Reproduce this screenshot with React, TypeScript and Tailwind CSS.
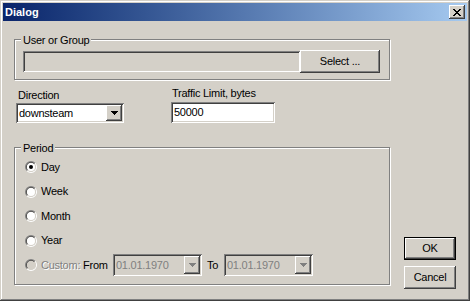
const raised =
  "shadow-[inset_-1px_-1px_#404040,inset_1px_1px_#fff,inset_-2px_-2px_#808080,inset_2px_2px_#d4d0c8]";
const sunken =
  "shadow-[inset_1px_1px_#808080,inset_-1px_-1px_#fff,inset_2px_2px_#404040,inset_-2px_-2px_#d4d0c8]";

function Arrow({ color = "#000" }: { color?: string }) {
  return (
    <svg width="7" height="4" viewBox="0 0 7 4" shapeRendering="crispEdges">
      <path d="M0 0h7v1H0zM1 1h5v1H1zM2 2h3v1H2zM3 3h1v1H3z" fill={color} />
    </svg>
  );
}

function CloseGlyph() {
  return (
    <svg width="8" height="7" viewBox="0 0 8 7" shapeRendering="crispEdges">
      <path
        d="M0 0h2v1H0zM6 0h2v1H6zM1 1h2v1H1zM5 1h2v1H5zM2 2h4v1H2zM3 3h2v1H3zM2 4h4v1H2zM1 5h2v1H1zM5 5h2v1H5zM0 6h2v1H0zM6 6h2v1H6z"
        fill="#000"
      />
    </svg>
  );
}

function Radio({ checked, disabled }: { checked?: boolean; disabled?: boolean }) {
  return (
    <svg width="12" height="12" viewBox="0 0 12 12" className="shrink-0">
      <circle cx="6" cy="6" r="5.5" fill="none" stroke="#808080" strokeDasharray="17.28 17.28" transform="rotate(135 6 6)" />
      <circle cx="6" cy="6" r="5.5" fill="none" stroke="#fff" strokeDasharray="17.28 17.28" transform="rotate(-45 6 6)" />
      <circle cx="6" cy="6" r="4.5" fill="none" stroke="#404040" strokeDasharray="14.14 14.14" transform="rotate(135 6 6)" />
      <circle cx="6" cy="6" r="4.5" fill="none" stroke="#d4d0c8" strokeDasharray="14.14 14.14" transform="rotate(-45 6 6)" />
      <circle cx="6" cy="6" r="4" fill={disabled ? "#d4d0c8" : "#fff"} />
      {checked && <circle cx="6" cy="6" r="2" fill="#000" />}
    </svg>
  );
}

function GroupBox({
  label,
  className,
  children,
}: {
  label: string;
  className: string;
  children: React.ReactNode;
}) {
  return (
    <div className={`relative border border-[#808080] shadow-[1px_1px_0_#fff,inset_1px_1px_0_#fff] ${className}`}>
      <span className="absolute -top-[6px] left-[6px] bg-[#d4d0c8] px-[2px]">{label}</span>
      {children}
    </div>
  );
}

function Combo({ value, className, disabled }: { value: string; className: string; disabled?: boolean }) {
  return (
    <div className={`flex p-[2px] ${sunken} ${disabled ? "bg-[#d4d0c8] text-[#808080]" : "bg-white"} ${className}`}>
      <div className="flex flex-1 items-center pl-[1px]">{value}</div>
      <div className={`flex w-[16px] items-center justify-center bg-[#d4d0c8] ${raised}`}>
        <Arrow color={disabled ? "#808080" : "#000"} />
      </div>
    </div>
  );
}

function Option({ label, checked, h }: { label: string; checked?: boolean; h: string }) {
  return (
    <div className={`flex items-center ${h}`}>
      <Radio checked={checked} />
      <span className="ml-[4px]">{label}</span>
    </div>
  );
}

export default function App() {
  return (
    <div className="flex h-[301px] w-[470px] flex-col bg-[#d4d0c8] p-[3px] font-['Liberation_Sans',Arial,sans-serif] text-[11px] leading-[13px] text-black shadow-[inset_-1px_-1px_#404040,inset_1px_1px_#d4d0c8,inset_-2px_-2px_#808080,inset_2px_2px_#fff]">
      <div className="flex h-[18px] items-center justify-between bg-linear-to-r from-[#0a246a] to-[#a6caf0] pr-[2px] pl-[2px]">
        <span className="font-bold text-white">Dialog</span>
        <div className={`flex h-[14px] w-[16px] items-center justify-center bg-[#d4d0c8] ${raised}`}>
          <CloseGlyph />
        </div>
      </div>

      <div className="flex flex-col pl-[11px] tracking-[-0.25px]">
        <GroupBox label="User or Group" className="mt-[18px] h-[41px] w-[376px] pt-[10px] pl-[8px]">
          <div className="flex items-center">
            <div className={`h-[21px] w-[277px] bg-[#d4d0c8] ${sunken}`} />
            <div className={`flex h-[23px] w-[80px] items-center justify-center ${raised}`}>Select ...</div>
          </div>
        </GroupBox>

        <div className="flex items-start pl-[2px]">
          <div className="mt-[9px] flex w-[108px] flex-col">
            <span className="pl-[2px]">Direction</span>
            <Combo value="downsteam" className="mt-[1px] h-[20px] w-[108px]" />
          </div>
          <div className="mt-[7px] ml-[47px] flex flex-col">
            <span className="pl-[1px]">Traffic Limit, bytes</span>
            <div className={`mt-[2px] flex h-[21px] w-[104px] items-center bg-white pl-[3px] ${sunken}`}>50000</div>
          </div>
        </div>

        <div className="mt-[24px] flex items-start">
          <GroupBox label="Period" className="flex h-[138px] w-[376px] flex-col pt-[7px] pl-[10px]">
            <Option label="Day" checked h="h-[24px]" />
            <Option label="Week" h="h-[25px]" />
            <Option label="Month" h="h-[24px]" />
            <Option label="Year" h="h-[25px]" />
            <div className="flex h-[24px] items-center">
              <Radio disabled />
              <span className="ml-[4px] w-[42px] text-[#808080] [text-shadow:1px_1px_0_#fff]">Custom:</span>
              <span className="w-[30px]">From</span>
              <Combo value="01.01.1970" disabled className="h-[22px] w-[89px]" />
              <span className="ml-[5px] w-[17px]">To</span>
              <Combo value="01.01.1970" disabled className="h-[22px] w-[89px]" />
            </div>
          </GroupBox>

          <div className="mt-[90px] ml-[14px] flex flex-col">
            <div className="flex h-[23px] w-[52px] items-center justify-center border border-black shadow-[inset_-1px_-1px_#404040,inset_1px_1px_#fff,inset_-2px_-2px_#808080]">
              OK
            </div>
            <div className={`mt-[6px] flex h-[23px] w-[52px] items-center justify-center ${raised}`}>Cancel</div>
          </div>
        </div>
      </div>
    </div>
  );
}
